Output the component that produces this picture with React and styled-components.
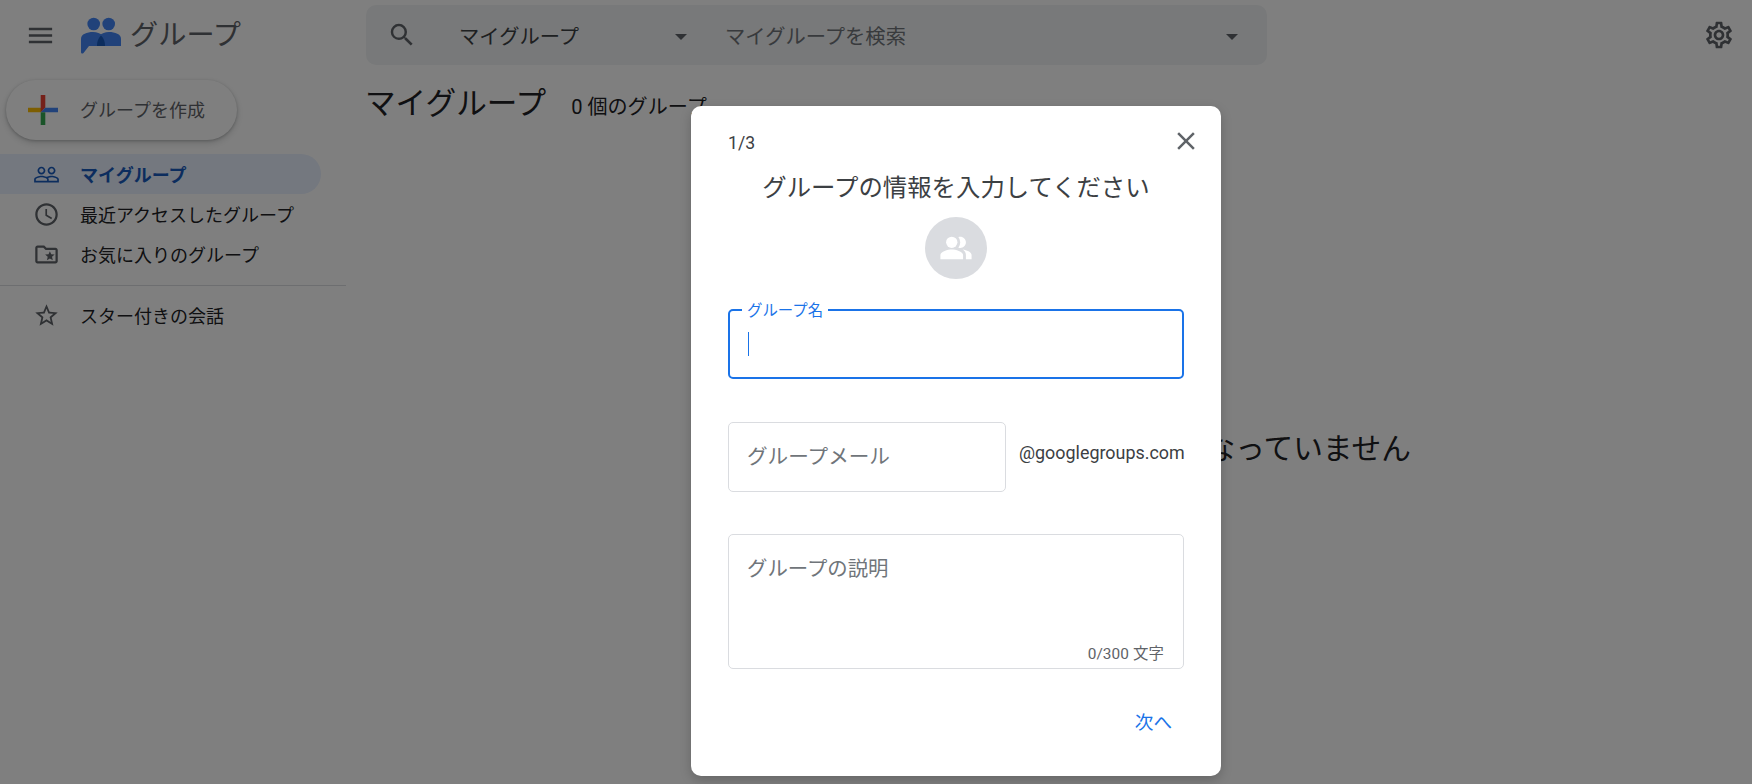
import React from "react";
import styled, { createGlobalStyle } from "styled-components";
import {
  MdMenu,
  MdSearch,
  MdOutlineSettings,
  MdPeopleOutline,
  MdAccessTime,
  MdOutlineFolderSpecial,
  MdStarBorder,
  MdClose,
  MdPeopleAlt,
} from "react-icons/md";

const Global = createGlobalStyle`
  html, body { margin: 0; padding: 0; height: 100%; background: #fff; overflow: hidden; }
  body { font-family: Roboto, "Noto Sans CJK JP", sans-serif; color: #202124; }
  * { box-sizing: border-box; }
`;

const Page = styled.div`
  position: relative;
  width: 1752px;
  height: 784px;
  overflow: hidden;
  background: #fff;
`;

const Header = styled.header`
  display: flex;
  align-items: center;
  height: 70px;
`;

const Brand = styled.div`
  display: flex;
  align-items: center;
  flex: none;
  width: 366px;
  padding-left: 25px;
  color: #5f6368;
  svg { flex: none; }
`;

const BrandLogo = styled.svg`
  width: 40px;
  height: 37px;
  margin-left: 25px;
`;

const BrandName = styled.span`
  margin-left: 9px;
  padding-top: 2px;
  font-size: 28.2px;
  font-weight: 400;
  line-height: 36px;
`;

const SearchBar = styled.div`
  display: flex;
  align-items: center;
  flex: none;
  width: 901px;
  height: 60px;
  padding: 0 29px 0 21px;
  border-radius: 10px;
  background: #f1f3f4;
  font-size: 20.3px;
  svg { flex: none; color: #5f6368; }
`;

const ScopeSelect = styled.div`
  display: flex;
  align-items: center;
  justify-content: space-between;
  flex: none;
  width: 228px;
  margin-left: 42px;
  color: #3c4043;
`;

const Caret = styled.span`
  flex: none;
  width: 0;
  height: 0;
  margin-top: 4px;
  border-left: 6px solid transparent;
  border-right: 6px solid transparent;
  border-top: 6px solid #5f6368;
`;

const QueryBox = styled.div`
  display: flex;
  align-items: center;
  justify-content: space-between;
  flex: 1;
  margin-left: 38px;
  color: #70757a;
`;

const SettingsButton = styled.div`
  display: flex;
  margin-left: auto;
  padding-right: 17px;
  color: #5f6368;
`;

const Body = styled.div`
  display: flex;
`;

const Sidebar = styled.nav`
  flex: none;
  width: 346px;
`;

const CreateButton = styled.div`
  display: flex;
  align-items: center;
  gap: 22px;
  width: 231px;
  height: 60px;
  margin: 10px 0 14px 6px;
  padding-left: 22px;
  border-radius: 30px;
  background: #fff;
  box-shadow: 0 1px 3px rgba(60, 64, 67, 0.3), 0 3px 6px 1px rgba(60, 64, 67, 0.15);
  color: #5f6368;
  font-size: 18px;
`;

const CreateLabel = styled.span`
  padding-bottom: 3px;
`;

const NavItem = styled.div`
  display: flex;
  align-items: center;
  gap: 20px;
  width: 321px;
  height: 40px;
  padding-left: 33px;
  border-radius: 0 20px 20px 0;
  background: ${(p) => (p.$active ? "#e8f0fe" : "transparent")};
  color: ${(p) => (p.$active ? "#185abc" : "#202124")};
  font-size: 18px;
  font-weight: ${(p) => (p.$active ? 700 : 400)};
  svg { flex: none; color: ${(p) => (p.$active ? "#185abc" : "#5f6368")}; }
`;

const Divider = styled.hr`
  height: 1px;
  margin: 11px 0 9px;
  border: 0;
  background: #dadce0;
`;

const Main = styled.main`
  flex: 1;
  padding: 15px 0 0 19px;
`;

const TitleRow = styled.div`
  display: flex;
  align-items: baseline;
  gap: 25px;
`;

const PageTitle = styled.h1`
  margin: 0;
  font-size: 30.6px;
  font-weight: 400;
  line-height: 38px;
`;

const GroupCount = styled.span`
  font-size: 20.1px;
`;

const EmptyMessage = styled.p`
  width: 1046px;
  margin: 308px 0 0;
  font-size: 29.7px;
  line-height: 36px;
  text-align: right;
`;

const Scrim = styled.div`
  position: absolute;
  inset: 0;
  display: flex;
  align-items: flex-start;
  padding: 106px 0 0 691px;
  background: rgba(0, 0, 0, 0.5);
`;

const Modal = styled.section`
  position: relative;
  width: 530px;
  height: 670px;
  padding: 22px 37px 0;
  border-radius: 10px;
  background: #fff;
  box-shadow: 0 4px 12px rgba(0, 0, 0, 0.2);
`;

const Step = styled.div`
  height: 30px;
  color: #3c4043;
  font-size: 17.6px;
  line-height: 30px;
`;

const CloseButton = styled.div`
  position: absolute;
  top: 20px;
  right: 20px;
  display: flex;
  color: #5f6368;
`;

const ModalTitle = styled.h2`
  margin: 15px 0 0;
  color: #3c4043;
  font-size: 24.4px;
  font-weight: 400;
  line-height: 30px;
  text-align: center;
  white-space: nowrap;
`;

const AvatarCircle = styled.div`
  display: flex;
  align-items: center;
  justify-content: center;
  width: 62px;
  height: 62px;
  margin: 14px auto 0;
  border-radius: 50%;
  background: #dadce0;
  color: #fff;
`;

const NameField = styled.div`
  position: relative;
  display: flex;
  align-items: center;
  height: 70px;
  margin-top: 30px;
  padding-left: 18px;
  border: 2px solid #1a73e8;
  border-radius: 5px;
`;

const FloatingLabel = styled.span`
  position: absolute;
  top: -10px;
  left: 12px;
  padding: 0 5px;
  background: #fff;
  color: #1a73e8;
  font-size: 15.4px;
  line-height: 20px;
`;

const TextCaret = styled.span`
  width: 1px;
  height: 24px;
  background: #1a73e8;
`;

const EmailRow = styled.div`
  display: flex;
  align-items: flex-start;
  gap: 13px;
  margin-top: 43px;
`;

const EmailField = styled.div`
  display: flex;
  align-items: center;
  flex: none;
  width: 278px;
  height: 70px;
  padding: 0 0 4px 18px;
  border: 1px solid #dadce0;
  border-radius: 5px;
  color: #70757a;
  font-size: 20.6px;
`;

const EmailDomain = styled.span`
  padding-top: 20px;
  color: #3c4043;
  font-size: 17.9px;
  line-height: 22px;
  white-space: nowrap;
`;

const DescriptionField = styled.div`
  display: flex;
  flex-direction: column;
  height: 135px;
  margin-top: 42px;
  padding: 22px 19px 3px 18px;
  border: 1px solid #dadce0;
  border-radius: 5px;
  color: #70757a;
  font-size: 20.4px;
  line-height: 24px;
`;

const Counter = styled.span`
  align-self: flex-end;
  margin-top: auto;
  color: #5f6368;
  font-size: 15.4px;
  letter-spacing: 0.1px;
  line-height: 22px;
`;

const Footer = styled.div`
  display: flex;
  align-items: center;
  justify-content: flex-end;
  height: 40px;
  margin-top: 31px;
  padding-right: 12px;
  color: #1a73e8;
  font-size: 18.6px;
`;

const GroupsLogo = () => (
  <BrandLogo viewBox="0 0 40 37" aria-hidden="true">
    <circle cx="12.7" cy="7" r="6.3" fill="#4285f4" />
    <circle cx="27.7" cy="7" r="6.3" fill="#4285f4" />
    <path d="M0 22C0 17 6 15 12 15C20 15 25 20 25 29H8L2.5 36C1.5 37 0 36.6 0 35Z" fill="#4285f4" />
    <path d="M15 29C15 20 20 15 28 15C34 15 40 17 40 22V29Z" fill="#4285f4" />
    <path d="M20 18.5C17 21 16 25 16 29H24C24 25 23 21 20 18.5Z" fill="#185abc" />
  </BrandLogo>
);

const ColorPlus = () => (
  <svg width="30" height="30" viewBox="0 0 30 30" aria-hidden="true">
    <polygon points="0,12.7 12.7,12.7 15,15 12.7,17.3 0,17.3" fill="#fbbc04" />
    <polygon points="12.7,0 17.3,0 17.3,12.7 12.7,17.3" fill="#ea4335" />
    <polygon points="30,12.7 17.3,12.7 12.7,17.3 30,17.3" fill="#4285f4" />
    <polygon points="12.7,17.3 17.3,17.3 17.3,30 12.7,30" fill="#34a853" />
  </svg>
);

export default function App() {
  return (
    <Page>
      <Global />
      <Header>
        <Brand>
          <MdMenu size={31} />
          <GroupsLogo />
          <BrandName>グループ</BrandName>
        </Brand>
        <SearchBar>
          <MdSearch size={30} />
          <ScopeSelect>
            マイグループ
            <Caret />
          </ScopeSelect>
          <QueryBox>
            マイグループを検索
            <Caret />
          </QueryBox>
        </SearchBar>
        <SettingsButton>
          <MdOutlineSettings size={32} />
        </SettingsButton>
      </Header>
      <Body>
        <Sidebar>
          <CreateButton>
            <ColorPlus />
            <CreateLabel>グループを作成</CreateLabel>
          </CreateButton>
          <NavItem $active>
            <MdPeopleOutline size={27} />
            マイグループ
          </NavItem>
          <NavItem>
            <MdAccessTime size={27} />
            最近アクセスしたグループ
          </NavItem>
          <NavItem>
            <MdOutlineFolderSpecial size={27} />
            お気に入りのグループ
          </NavItem>
          <Divider />
          <NavItem>
            <MdStarBorder size={27} />
            スター付きの会話
          </NavItem>
        </Sidebar>
        <Main>
          <TitleRow>
            <PageTitle>マイグループ</PageTitle>
            <GroupCount>0 個のグループ</GroupCount>
          </TitleRow>
          <EmptyMessage>なっていません</EmptyMessage>
        </Main>
      </Body>
      <Scrim>
        <Modal>
          <Step>1/3</Step>
          <CloseButton>
            <MdClose size={30} />
          </CloseButton>
          <ModalTitle>グループの情報を入力してください</ModalTitle>
          <AvatarCircle>
            <MdPeopleAlt size={34} />
          </AvatarCircle>
          <NameField>
            <FloatingLabel>グループ名</FloatingLabel>
            <TextCaret />
          </NameField>
          <EmailRow>
            <EmailField>グループメール</EmailField>
            <EmailDomain>@googlegroups.com</EmailDomain>
          </EmailRow>
          <DescriptionField>
            グループの説明
            <Counter>0/300 文字</Counter>
          </DescriptionField>
          <Footer>次へ</Footer>
        </Modal>
      </Scrim>
    </Page>
  );
}
